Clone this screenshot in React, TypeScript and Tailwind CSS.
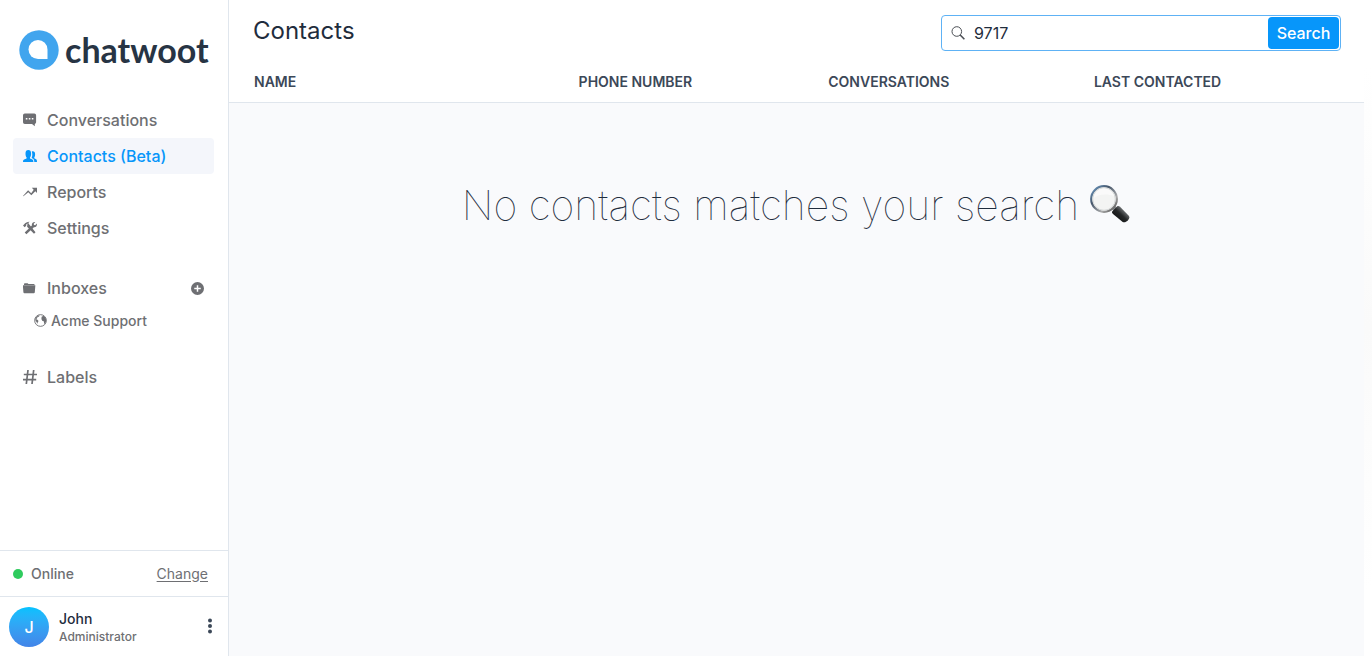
import { useState } from 'react';
import type { ReactNode, SVGProps } from 'react';

type IconProps = SVGProps<SVGSVGElement>;

function Icon({ children, ...props }: IconProps) {
  return (
    <svg viewBox="0 0 14 14" width="14" height="14" fill="currentColor" aria-hidden="true" {...props}>
      {children}
    </svg>
  );
}

const ChatIcon = () => (
  <Icon>
    <path
      fillRule="evenodd"
      d="M1.800 .4h9.500a1.800 1.800 0 0 1 1.800 1.800v7a1.800 1.800 0 0 1-1.300 1.700v2.300L9 11H1.800A1.800 1.800 0 0 1 0 9.200v-7A1.800 1.800 0 0 1 1.800.4ZM2.800 5v1.600h1.600V5Zm3 0v1.600h1.600V5Zm3 0v1.600h1.600V5Z"
    />
  </Icon>
);

const PeopleIcon = () => (
  <Icon>
    <path d="M0 13c0-2 .5-2.600 2.300-3.100 1.200-.3 1.500-.6 1.300-1.400C2.800 7.600 2.500 6.200 2.500 4.500 2.500 2 3.500.9 5.300.9s2.800 1.100 2.800 3.600c0 1.700-.3 3.100-1.100 4-.2.800.1 1.100 1.300 1.400 1.600.5 2.100 1.100 2.100 3.100Z" />
    <path d="M8.800 2.600c1.700-.7 3.300.2 3.300 2.600 0 1.500-.3 2.500-.8 3.200-.1.700 0 1 .9 1.300 1.500.5 1.800 1.200 1.800 3.300h-2.700c0-2.200-.6-3.300-2.300-3.800-.4-.1-.5-.2-.3-.5.700-1.200.9-4 .1-6.100Z" />
  </Icon>
);

const GraphIcon = () => (
  <Icon>
    <path d="M8.800 2.800H14V8l-1.700-1.700-4 4-3-3L.4 11.300 0 10.900l5.100-5.700 3.100 3 2.500-3.500Z" />
  </Icon>
);

const ToolsIcon = () => (
  <Icon>
    <path d="M4.500 2.200 3.200 3.600v1.200L1.700 6.200 0 4.600l1-1.100C2.500 1.700 4.400.7 6.600.8 5.800 1.300 5.300 1.800 5.500 2.500l7 8.800-1.500 1.500-6.900-7Z" />
    <path d="M12.300 1 10.700 2.800l.3 1.200 1.200.3L13.800 2.600c.6 2.200-.8 3.900-2.900 3.600L3.400 13.200 1.700 11.500 8.900 4.600C8.400 2.400 10.200.6 12.300 1Z" />
  </Icon>
);

const FolderIcon = () => (
  <Icon>
    <path d="M1 3.400c0-.8.3-1.200 1-1.200h2.600c.5 0 .7.800 1.200.8h4.700c.8 0 1.100.3 1.100.9H1Z" />
    <path d="M.2 4.300h11.700c.4 0 .5.300.4.700l-.5 6.200c-.1.700-.4 1-1 1H1.400c-.6 0-.9-.3-1-1L-.1 5c0-.4 0-.7.300-.7Z" />
  </Icon>
);

const GlobeIcon = () => (
  <Icon width="13" height="13">
    <circle cx="7" cy="7" r="6.300" fill="none" stroke="currentColor" />
    <path d="M1.500 4.200 4.400 1.500l1.500.2-.4 1-1.800.8-.7 1.500-1 .5 1.700.7 1.200 1.300-.8 1.500-.4 1.600L2.700 8.700 1.500 6.900ZM8.200 3l2-1.200 2.300 2.300.8 2.900-.7 2.200-1.500 1.800-.6-3.200-1.700-.4-.8-2Z" />
  </Icon>
);

const HashIcon = () => (
  <Icon fill="none" stroke="currentColor" strokeWidth="1.700">
    <path d="M5 0 3.300 14M10.700 0 9 14M.8 4.500h13.200M0 9.600h13.200" />
  </Icon>
);

const AddIcon = () => (
  <Icon width="13" height="13">
    <path
      fillRule="evenodd"
      d="M7 0a7 7 0 1 1 0 14A7 7 0 0 1 7 0Zm-.8 3.500v2.700H3.500v1.600h2.700v2.700h1.600V7.800h2.700V6.200H7.800V3.500Z"
    />
  </Icon>
);

const SearchIcon = () => (
  <Icon fill="none" stroke="currentColor" className="shrink-0 text-[#4b4f55]">
    <circle cx="5.800" cy="5.500" r="4.800" />
    <path d="m9.200 9 4.200 4.200" strokeWidth="1.600" />
  </Icon>
);

function Magnifier() {
  return (
    <svg viewBox="0 0 42 42" className="size-[42px] shrink-0" role="img" aria-label="magnifying glass">
      <defs>
        <linearGradient id="rim" x1="0" y1="0" x2="1" y2="1">
          <stop offset="0" stopColor="#6f9fca" />
          <stop offset=".35" stopColor="#46566a" />
          <stop offset=".7" stopColor="#aaa" />
          <stop offset="1" stopColor="#3c3c3c" />
        </linearGradient>
        <linearGradient id="grip" x1="0" y1="1" x2="1" y2="0">
          <stop offset="0" stopColor="#050505" />
          <stop offset=".5" stopColor="#252728" />
          <stop offset=".7" stopColor="#66696b" />
          <stop offset="1" stopColor="#080808" />
        </linearGradient>
      </defs>
      <path d="m23 25 3-3 3.500 3-3 3.200Z" fill="#919598" />
      <path d="m23.500 27 4.500-4.500c1-.7 2-.5 3 .3l8.800 9c2.300 2.800-3.300 8.200-6.100 6.100L24 30c-.9-1-1.200-2-.5-3Z" fill="url(#grip)" />
      <circle cx="15" cy="15" r="12.800" fill="#f3f4f3" stroke="url(#rim)" strokeWidth="2.200" />
      <circle cx="15" cy="15" r="11.300" fill="none" stroke="#d5d8d8" strokeWidth="1" />
      <path d="M4.500 14a10.500 10.500 0 0 1 20.500-2C18.500 9.500 9.500 10 4.500 14Z" fill="#fafafa" />
    </svg>
  );
}

function NavItem({ icon, label, active = false }: { icon: ReactNode; label: string; active?: boolean }) {
  return (
    <a
      href="#"
      aria-current={active ? 'page' : undefined}
      className={`flex h-9 items-center gap-2.5 rounded px-2.5 text-base font-medium ${
        active ? 'bg-[#f4f6fb] text-[#0796fa]' : 'text-[#6e6f73]'
      }`}
    >
      {icon}
      {label}
    </a>
  );
}

function Sidebar() {
  return (
    <aside className="flex w-[229px] shrink-0 flex-col border-r border-[#e0e6ed] bg-white">
      <a href="#" className="mb-0.5 flex h-[100px] items-center gap-1.5 pl-[19px] text-[#273444]">
        <svg viewBox="0 0 40 40" className="size-10 shrink-0" aria-hidden="true">
          <circle cx="20" cy="20" r="19.700" fill="#41a5ee" />
          <path d="M28.500 29H19a9.500 9.500 0 1 1 9.500-9.500Z" fill="#fff" />
        </svg>
        <span className="font-[Lato] text-[34px] leading-9 font-bold">chatwoot</span>
      </a>
      <nav className="flex-1 pr-3.5 pl-[13px]">
        <NavItem icon={<ChatIcon />} label="Conversations" />
        <NavItem icon={<PeopleIcon />} label="Contacts (Beta)" active />
        <NavItem icon={<GraphIcon />} label="Reports" />
        <NavItem icon={<ToolsIcon />} label="Settings" />
        <div className="mt-6 flex items-center justify-between pr-2.5 text-[#6e6f73]">
          <NavItem icon={<FolderIcon />} label="Inboxes" />
          <button type="button" aria-label="Add inbox">
            <AddIcon />
          </button>
        </div>
        <a href="#" className="flex h-[29px] items-center gap-1 pl-[21px] text-sm font-medium text-[#6e6f73]">
          <GlobeIcon />
          Acme Support
        </a>
        <div className="mt-6">
          <NavItem icon={<HashIcon />} label="Labels" />
        </div>
      </nav>
      <div className="flex h-[46px] items-center justify-between border-t border-[#e0e6ed] pr-5 pl-[13px] text-sm text-[#6e6f73]">
        <span className="flex items-center gap-2 font-medium">
          <span className="size-2.5 rounded-full bg-[#2fcb5e]" />
          Online
        </span>
        <button type="button" className="underline underline-offset-2">
          Change
        </button>
      </div>
      <div className="flex h-[60px] items-center border-t border-[#e0e6ed] pr-[11px] pl-[9px]">
        <span className="flex size-10 items-center justify-center rounded-full bg-linear-to-b from-[#00c2ff] to-[#4284e8] text-base font-medium text-white">
          J
        </span>
        <div className="ml-2.5 flex-1">
          <p className="text-sm leading-5 font-medium text-[#1f2d3d]">John</p>
          <p className="text-xs leading-4 font-medium text-[#6e6f73]">Administrator</p>
        </div>
        <button type="button" aria-label="Account options" className="text-[#3c4858]">
          <svg viewBox="0 0 14 18" width="14" height="18" fill="currentColor" aria-hidden="true">
            <circle cx="7" cy="2.500" r="2" />
            <circle cx="7" cy="8" r="2" />
            <circle cx="7" cy="13.500" r="2" />
          </svg>
        </button>
      </div>
    </aside>
  );
}

export default function App() {
  const [query, setQuery] = useState('9717');

  return (
    <div className="flex min-h-screen bg-white pb-3.5 font-[Inter,sans-serif] [font-optical-sizing:none]">
      <Sidebar />
      <main className="flex min-w-0 flex-1 flex-col bg-[#f9fafc]">
        <header className="flex items-start justify-between bg-white pt-[15px] pr-[23px] pb-3 pl-6">
          <h1 className="text-2xl leading-8 text-[#1f2d3d]">Contacts</h1>
          <form
            className="flex h-9 w-[400px] items-center rounded border border-[#5eb2f5] pr-px pl-[9px]"
            onSubmit={(event) => event.preventDefault()}
          >
            <SearchIcon />
            <input
              type="text"
              aria-label="Search contacts"
              value={query}
              onChange={(event) => setQuery(event.target.value)}
              className="min-w-0 flex-1 px-[9px] text-base text-[#1f2d3d] outline-none"
            />
            <button type="submit" className="h-8 w-[71px] rounded bg-[#0796fa] text-base font-medium text-white">
              Search
            </button>
          </form>
        </header>
        <table className="w-full table-fixed border-b border-[#e0e6ed] bg-white text-left text-sm text-[#3c4858]">
          <thead>
            <tr className="h-[39px]">
              <th className="w-[28.6%] pl-[25px] font-semibold">NAME</th>
              <th className="w-[22%] pl-[25px] font-semibold">PHONE NUMBER</th>
              <th className="w-[23.4%] pl-[25px] font-semibold">CONVERSATIONS</th>
              <th className="w-[26%] pl-[25px] font-semibold">LAST CONTACTED</th>
            </tr>
          </thead>
        </table>
        <section className="flex items-center justify-center gap-2.5 pt-[72px]">
          <p className="text-[41px] leading-[60px] font-thin text-[#1f2d3d]">No contacts matches your search</p>
          <Magnifier />
        </section>
      </main>
      <div className="w-2 shrink-0 bg-linear-to-b from-white from-10% via-[#fafafa] to-white to-90%" />
    </div>
  );
}
